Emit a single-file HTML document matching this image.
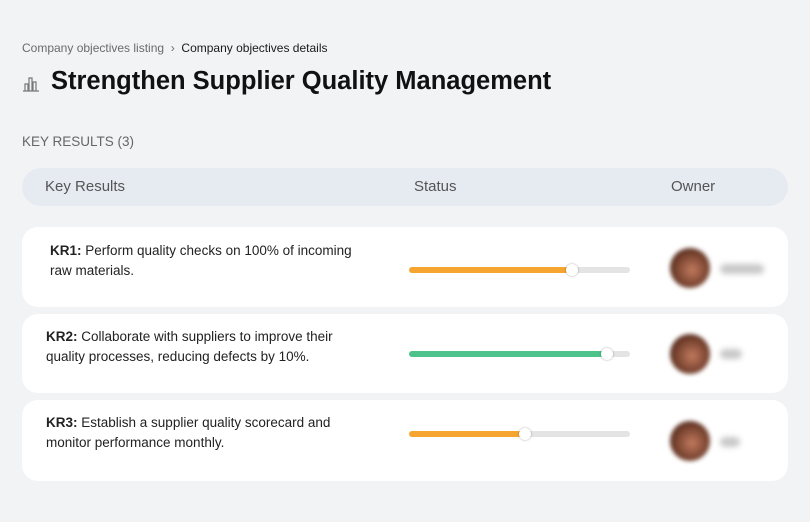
<!DOCTYPE html>
<html><head><style>
body{margin:0;width:810px;height:522px;background:#f2f3f5;font-family:"Liberation Sans",sans-serif;position:relative;overflow:hidden}
.a{position:absolute}
.bc{left:22px;top:41px;font-size:12px;color:#6b6b6b}
.bc b{font-weight:normal;color:#1a1a1a}
h1{position:absolute;left:51px;top:67px;margin:0;font-size:25.5px;font-weight:bold;color:#111}
.kr{left:22px;top:134px;font-size:13.5px;color:#666}
.hdr{left:22px;top:168px;width:766px;height:38px;background:#e6eaf1;border-radius:19px;font-size:15px;color:#555}
.hdr span{position:absolute;top:10px}
.card{left:22px;width:766px;background:#fff;border-radius:16px}
.t{position:absolute;left:26px;font-size:13.5px;line-height:20px;color:#222;width:330px}
.tr{position:absolute;left:387px;width:221px;height:6px;background:#e4e4e4;border-radius:3px}
.f{position:absolute;left:0;top:0;height:6px;border-radius:3px}
.k{position:absolute;top:-3px;width:12px;height:12px;border-radius:50%;background:#fff;box-shadow:0 0 2px rgba(0,0,0,.35);margin-left:-6px}
.av{position:absolute;left:648px;width:40px;height:40px;border-radius:50%;background:radial-gradient(circle at 55% 55%,#c27a5e,#6b3a28 60%,#2a1712);filter:blur(2px)}
.nm{position:absolute;left:698px;height:10px;background:#c8c8c8;border-radius:5px;filter:blur(3px)}
</style></head><body>
<div class="a bc">Company objectives listing &nbsp;›&nbsp; <b>Company objectives details</b></div>
<svg class="a" style="left:22px;top:75px" width="18" height="18" viewBox="0 0 18 18" fill="none" stroke="#777" stroke-width="1.2"><path d="M1 16h16M3 16V9h3v7M7 16V3h3v13M11 16V7h3v9"/></svg>
<h1>Strengthen Supplier Quality Management</h1>
<div class="a kr">KEY RESULTS (3)</div>
<div class="a hdr"><span style="left:23px">Key Results</span><span style="left:392px">Status</span><span style="left:649px">Owner</span></div>

<div class="a card" style="top:227px;height:80px">
<div class="t" style="top:14px;left:28px;width:322px"><b>KR1:</b> Perform quality checks on 100% of incoming raw materials.</div>
<div class="tr" style="top:40px"><div class="f" style="width:163px;background:#f7a531"></div><div class="k" style="left:163px"></div></div>
<div class="av" style="top:21px"></div><div class="nm" style="top:37px;width:44px"></div>
</div>
<div class="a card" style="top:314px;height:79px">
<div class="t" style="top:13px;left:24px;width:315px"><b>KR2:</b> Collaborate with suppliers to improve their quality processes, reducing defects by 10%.</div>
<div class="tr" style="top:37px"><div class="f" style="width:198px;background:#4cc38a"></div><div class="k" style="left:198px"></div></div>
<div class="av" style="top:20px"></div><div class="nm" style="top:35px;width:22px"></div>
</div>
<div class="a card" style="top:400px;height:81px">
<div class="t" style="top:13px;left:24px"><b>KR3:</b> Establish a supplier quality scorecard and monitor performance monthly.</div>
<div class="tr" style="top:31px"><div class="f" style="width:116px;background:#f7a531"></div><div class="k" style="left:116px"></div></div>
<div class="av" style="top:21px"></div><div class="nm" style="top:37px;width:20px"></div>
</div>
</body></html>
